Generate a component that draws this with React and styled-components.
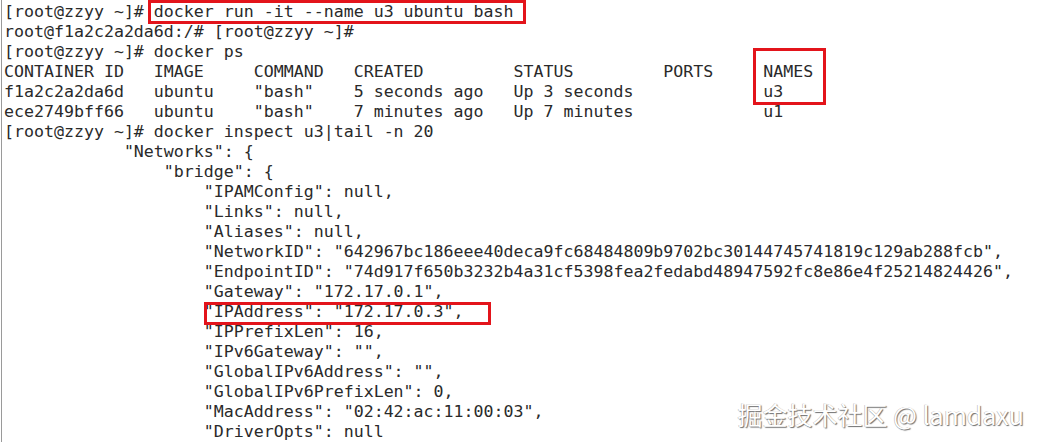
import React from "react";
import styled, { createGlobalStyle } from "styled-components";

const GlobalStyle = createGlobalStyle`
  html, body {
    margin: 0;
    padding: 0;
    background: #ffffff;
  }
  body {
    width: 1039px;
    height: 442px;
    overflow: hidden;
  }
`;

const lines = [
  "[root@zzyy ~]# docker run -it --name u3 ubuntu bash",
  "root@f1a2c2a2da6d:/# [root@zzyy ~]#",
  "[root@zzyy ~]# docker ps",
  "CONTAINER ID   IMAGE     COMMAND   CREATED         STATUS         PORTS     NAMES",
  'f1a2c2a2da6d   ubuntu    "bash"    5 seconds ago   Up 3 seconds             u3',
  'ece2749bff66   ubuntu    "bash"    7 minutes ago   Up 7 minutes             u1',
  "[root@zzyy ~]# docker inspect u3|tail -n 20",
  '            "Networks": {',
  '                "bridge": {',
  '                    "IPAMConfig": null,',
  '                    "Links": null,',
  '                    "Aliases": null,',
  '                    "NetworkID": "642967bc186eee40deca9fc68484809b9702bc30144745741819c129ab288fcb",',
  '                    "EndpointID": "74d917f650b3232b4a31cf5398fea2fedabd48947592fc8e86e4f25214824426",',
  '                    "Gateway": "172.17.0.1",',
  '                    "IPAddress": "172.17.0.3",',
  '                    "IPPrefixLen": 16,',
  '                    "IPv6Gateway": "",',
  '                    "GlobalIPv6Address": "",',
  '                    "GlobalIPv6PrefixLen": 0,',
  '                    "MacAddress": "02:42:ac:11:00:03",',
  '                    "DriverOpts": null',
];

// red annotation frames drawn over the terminal text
const marks = [
  { x: 146, y: 0, w: 378, h: 24 },
  { x: 751, y: 48, w: 73, h: 57 },
  { x: 202, y: 302, w: 287, h: 23 },
];

export default function App() {
  return (
    <>
      <GlobalStyle />
      <Terminal>
        {lines.map((text, i) => (
          <Line key={i}>{text}</Line>
        ))}
        {marks.map((m, i) => (
          <Mark key={i} style={{ left: m.x, top: m.y, width: m.w, height: m.h }} />
        ))}
        <Watermark>掘金技术社区 @ lamdaxu</Watermark>
      </Terminal>
    </>
  );
}

const Terminal = styled.div`
  position: relative;
  box-sizing: border-box;
  width: 1039px;
  height: 442px;
  margin-left: 1px;
  padding: 2px 0 0 2px;
  border-left: 1px solid #9a9a9a;
  background: #ffffff;
  overflow: hidden;
`;

const Line = styled.div`
  height: 20px;
  line-height: 20px;
  font-family: "DejaVu Sans Mono", "Liberation Mono", monospace;
  font-size: 16.6px;
  color: #2a2a2a;
  white-space: pre;
`;

const Mark = styled.div`
  position: absolute;
  box-sizing: border-box;
  border: 3px solid #e3141b;
  pointer-events: none;
`;

const Watermark = styled.div`
  position: absolute;
  right: 16px;
  bottom: 13px;
  font-family: "Noto Sans CJK SC", "Noto Sans", sans-serif;
  font-size: 25px;
  line-height: 30px;
  color: #ffffff;
  white-space: pre;
  text-shadow: 1px 1px 1px #6f6f6f, -0.5px -0.5px 0 #b5b5b5;
`;
